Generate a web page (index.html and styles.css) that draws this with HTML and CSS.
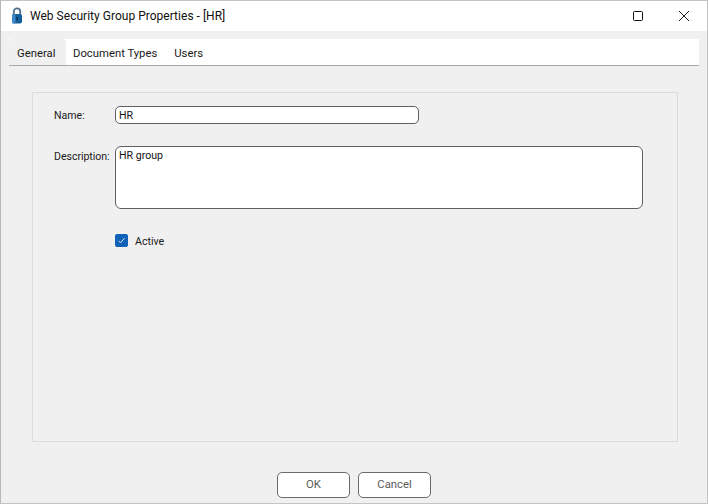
FILE: index.html
```html
<!DOCTYPE html>
<html lang="en">
<head>
<meta charset="utf-8">
<title>Web Security Group Properties - [HR]</title>
<link rel="stylesheet" href="styles.css">
</head>
<body>
<div class="window">
  <header class="titlebar">
    <svg class="app-icon" width="12" height="17" viewBox="0 0 12 17">
      <path d="M2.8 8V4.6a3.2 3.2 0 0 1 6.4 0V8" fill="none" stroke="#4f6d8c" stroke-width="1.8"/>
      <rect x="1" y="7" width="10" height="9.5" rx="2" fill="#14609f"/>
      <rect x="1" y="7" width="3.5" height="9.5" rx="1.5" fill="#3c88c8"/>
      <rect x="5.4" y="10" width="1.4" height="3.5" fill="#0a2f52"/>
    </svg>
    <span class="title">Web Security Group Properties - [HR]</span>
    <div class="controls">
      <svg width="12" height="12" viewBox="0 0 12 12" class="ctl-max"><rect x="1.5" y="1.5" width="9" height="9" rx="1" fill="none" stroke="#111" stroke-width="1"/></svg>
      <svg width="12" height="12" viewBox="0 0 12 12" class="ctl-close"><path d="M1 1l10 10M11 1L1 11" stroke="#222" stroke-width="1" fill="none"/></svg>
    </div>
  </header>
  <main class="body">
    <nav class="tabs">
      <span class="tab tab-active">General</span>
      <span class="tab tab-docs">Document Types</span>
      <span class="tab tab-users">Users</span>
    </nav>
    <section class="panel">
      <div class="row row-name">
        <label class="label">Name:</label>
        <div class="input input-name">HR</div>
      </div>
      <div class="row row-desc">
        <label class="label label-desc">Description:</label>
        <div class="input input-desc">HR group</div>
      </div>
      <div class="row row-check">
        <span class="check">
          <svg width="9" height="9" viewBox="0 0 9 9"><path d="M1.5 4.8l2 2 4-4.6" fill="none" stroke="#dbe9f7" stroke-width="1"/></svg>
        </span>
        <span class="check-label">Active</span>
      </div>
    </section>
    <footer class="buttons">
      <button class="btn">OK</button>
      <button class="btn">Cancel</button>
    </footer>
  </main>
</div>
</body>
</html>
```
FILE: styles.css
```css
* { box-sizing: border-box; }
html, body { margin: 0; padding: 0; }
body { width: 708px; height: 504px; overflow: hidden; background: #f0f0f0; }
.window {
  width: 708px; height: 504px;
  display: flex; flex-direction: column;
  border: 1px solid #c4c4c4;
  border-left-color: #b8b8b8;
  background: #f0f0f0;
  font-family: Roboto, "Open Sans", "Liberation Sans", sans-serif;
  font-size: 11.3px;
  color: #1a1a1a;
}
.titlebar {
  height: 30px; flex: none;
  display: flex; align-items: center;
  background: #fff;
  padding-left: 10px;
}
.app-icon { margin-right: 7px; margin-top: -1px; }
.title { font-size: 12px; color: #111; letter-spacing: 0.02px; }
.controls {
  margin-left: auto; display: flex; align-items: center;
  gap: 34px; padding-right: 17px;
}
.body { flex: 1; display: flex; flex-direction: column; padding: 8px 8px 5px 8px; }
.tabs {
  height: 27px; flex: none;
  display: flex; align-items: stretch;
  background: #fff;
  border-bottom: 1px solid #a8a8a8;
}
.tab { padding: 5px 8px 0 8px; line-height: 20px; color: #1a1a1a; }
.tab-active { background: #f0f0f0; border-radius: 4px 4px 0 0; width: 57px; }
.tab-docs { padding-left: 7px; }
.tab-users { padding-left: 9px; }
.panel {
  margin: 26px 21px 0 23px;
  height: 350px; flex: none;
  border: 1px solid #dcdcdc;
  padding: 13px 0 0 21px;
  display: flex; flex-direction: column;
  font-size: 10.6px;
}
.row { display: flex; align-items: flex-start; }
.label { width: 61px; flex: none; line-height: 18px; padding-top: 1px; height: 18px; }
.label-desc { padding-top: 2px; letter-spacing: -0.05px; }
.input {
  background: #fff;
  border: 1px solid #5f5f5f;
  padding: 1px 3px 0;
  line-height: 16px;
  color: #111;
}
.input-name { width: 304px; height: 18px; border-radius: 5px; }
.row-desc { margin-top: 22px; }
.input-desc { width: 528px; height: 63px; border-radius: 6px; }
.row-check { margin-top: 25px; margin-left: 61px; align-items: center; }
.check {
  width: 13px; height: 13px; border-radius: 2px;
  background: #0f62b8;
  display: flex; align-items: center; justify-content: center;
}
.check-label { margin-left: 7px; line-height: 13px; padding-top: 1px; height: 13px; }
.buttons {
  margin-top: auto;
  display: flex; justify-content: center; gap: 8px;
}
.btn {
  width: 73px; height: 26px;
  background: #fff;
  border: 1px solid #6a6a6a;
  border-radius: 5px;
  font: inherit;
  color: #5a5a5a;
  padding: 0 0 1px;
}
```
